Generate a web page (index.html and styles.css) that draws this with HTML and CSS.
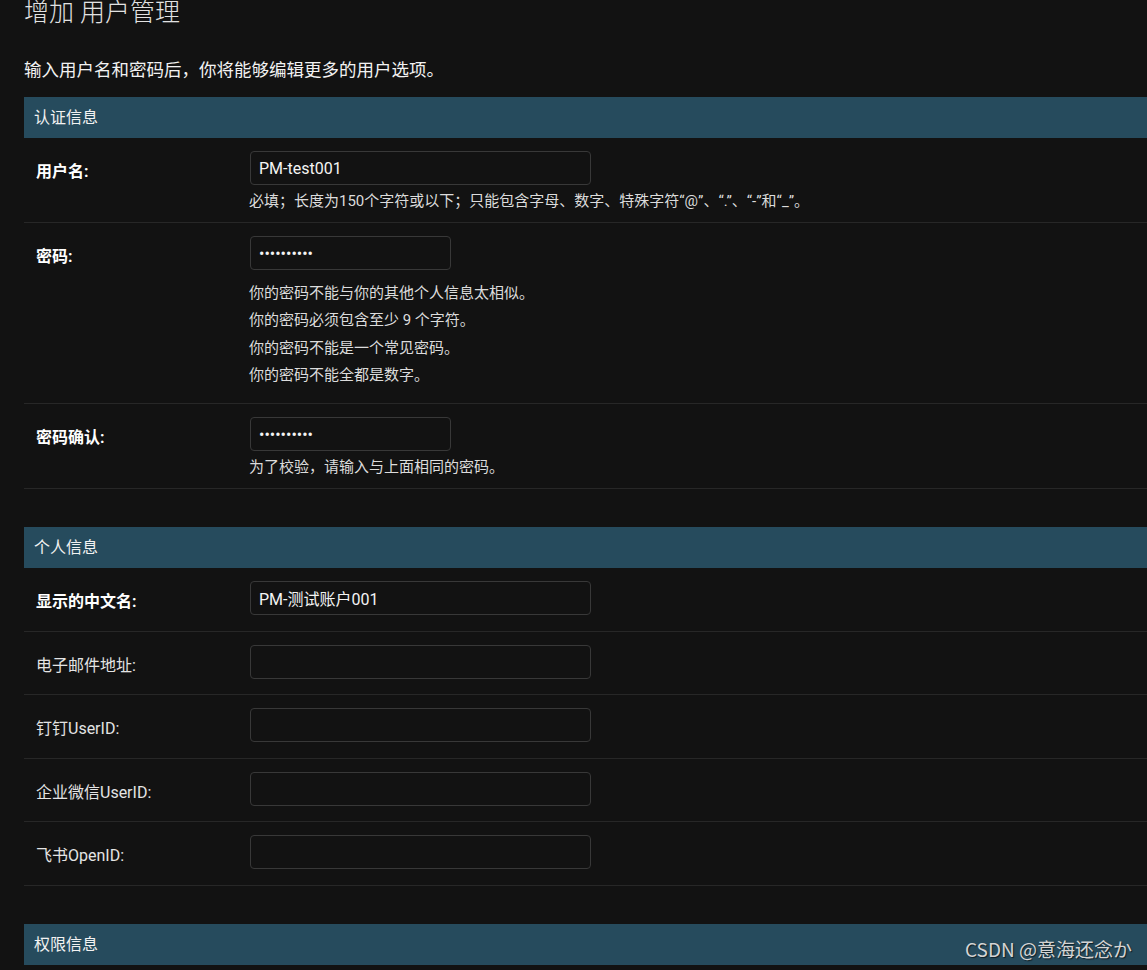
FILE: index.html
```html
<!DOCTYPE html>
<html lang="zh-CN">
<head>
<meta charset="utf-8">
<title>增加 用户管理</title>
<link rel="stylesheet" href="styles.css">
</head>
<body>
<div class="content">
  <h1 class="page-title">增加 用户管理</h1>
  <p class="intro">输入用户名和密码后，你将能够编辑更多的用户选项。</p>

  <fieldset class="module">
    <h2 class="caption">认证信息</h2>
    <div class="form-row has-help">
      <div class="field">
        <label class="required">用户名:</label>
        <input class="text-input wide" type="text" value="PM-test001">
      </div>
      <div class="help">必填；长度为150个字符或以下；只能包含字母、数字、特殊字符“@”、“.”、“-”和“_”。</div>
    </div>
    <div class="form-row has-help">
      <div class="field">
        <label class="required">密码:</label>
        <input class="text-input narrow" type="password" value="abcdefghij">
      </div>
      <ul class="help help-list">
        <li>你的密码不能与你的其他个人信息太相似。</li>
        <li>你的密码必须包含至少 9 个字符。</li>
        <li>你的密码不能是一个常见密码。</li>
        <li>你的密码不能全都是数字。</li>
      </ul>
    </div>
    <div class="form-row has-help">
      <div class="field">
        <label class="required">密码确认:</label>
        <input class="text-input narrow" type="password" value="abcdefghij">
      </div>
      <div class="help">为了校验，请输入与上面相同的密码。</div>
    </div>
  </fieldset>

  <fieldset class="module">
    <h2 class="caption">个人信息</h2>
    <div class="form-row">
      <div class="field">
        <label class="required">显示的中文名:</label>
        <input class="text-input wide" type="text" value="PM-测试账户001">
      </div>
    </div>
    <div class="form-row">
      <div class="field">
        <label>电子邮件地址:</label>
        <input class="text-input wide" type="text" value="">
      </div>
    </div>
    <div class="form-row">
      <div class="field">
        <label>钉钉UserID:</label>
        <input class="text-input wide" type="text" value="">
      </div>
    </div>
    <div class="form-row">
      <div class="field">
        <label>企业微信UserID:</label>
        <input class="text-input wide" type="text" value="">
      </div>
    </div>
    <div class="form-row">
      <div class="field">
        <label>飞书OpenID:</label>
        <input class="text-input wide" type="text" value="">
      </div>
    </div>
  </fieldset>

  <fieldset class="module">
    <h2 class="caption">权限信息</h2>
  </fieldset>
</div>
<div class="watermark">CSDN @意海还念か</div>
</body>
</html>
```

FILE: styles.css
```css
html, body {
  margin: 0;
  padding: 0;
  background: #121212;
  overflow: hidden;
}

body {
  font-family: Roboto, "Noto Sans CJK SC", sans-serif;
  color: #eeeeee;
  position: relative;
  height: 970px;
}

.content {
  padding: 0 0 0 24px;
}

.page-title {
  margin: -2px 0 0;
  font-size: 25px;
  line-height: 30px;
  font-weight: 300;
  color: #e2e2e2;
}

.intro {
  margin: 30px 0 15px;
  font-size: 17.5px;
  line-height: 24px;
  color: #f2f2f2;
}

.module {
  border: none;
  margin: 0 0 38px;
  padding: 0;
  min-width: 0;
}

.caption {
  margin: 0;
  height: 41px;
  line-height: 41px;
  padding: 0 0 0 10px;
  background: #264b5d;
  color: #f2f2f2;
  font-size: 16px;
  font-weight: 400;
}

.form-row {
  padding: 13px 12px 15.5px;
  border-bottom: 1px solid #272727;
}

.form-row.has-help {
  padding-bottom: 7px;
}

.field {
  display: flex;
  align-items: flex-start;
}

.field label {
  flex: 0 0 214px;
  box-sizing: border-box;
  padding-top: 8px;
  line-height: 26px;
  font-size: 16px;
  color: #e4e4e4;
}

.field label.required {
  font-weight: 700;
  color: #ffffff;
}

.text-input {
  box-sizing: border-box;
  height: 34px;
  margin: 0;
  padding: 0 8px;
  background: #121212;
  border: 1px solid #383838;
  border-radius: 4px;
  color: #f4f4f4;
  font-family: Roboto, "Noto Sans CJK SC", sans-serif;
  font-size: 16px;
  outline: none;
}

.text-input.wide {
  width: 341px;
}

.text-input.narrow {
  width: 201px;
}

.help {
  margin: 3px 0 0 213px;
  font-size: 15px;
  line-height: 27px;
  color: #dcdcdc;
}

.help-list {
  list-style: none;
  margin-top: 10px;
  margin-bottom: 7px;
  padding: 0;
}

.help-list li {
  line-height: 27.3px;
}

.watermark {
  position: absolute;
  right: 15px;
  top: 935px;
  font-family: "Noto Sans CJK SC", sans-serif;
  font-size: 19px;
  line-height: 28px;
  color: #d4d4d4;
  text-shadow: 1px 1px 1px rgba(0, 0, 0, 0.6);
}
```
